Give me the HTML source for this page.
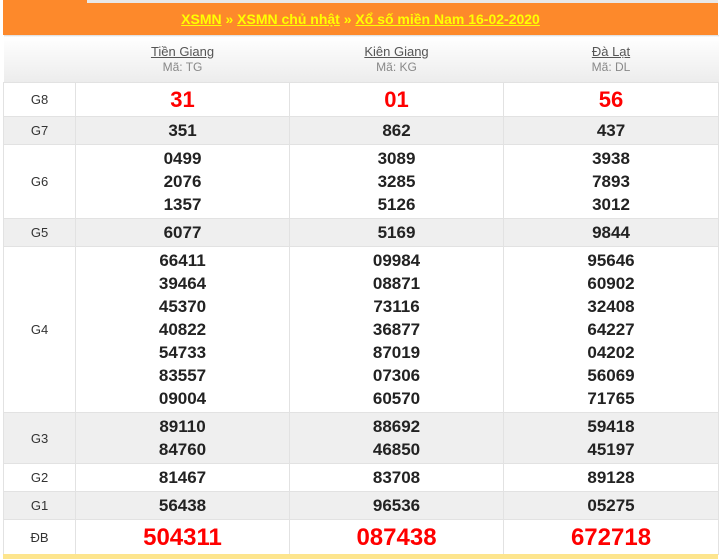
<!DOCTYPE html>
<html><head><meta charset="utf-8"><style>
*{margin:0;padding:0;box-sizing:border-box}
body{width:721px;height:559px;background:#fff;font-family:"Liberation Sans",Arial,sans-serif;position:relative;overflow:hidden}
.hd{position:absolute;top:0;left:3px;width:715px;height:35px;background:#fd892b;text-align:center;font-weight:bold;font-size:14px;line-height:38px;color:#ffff00}
.hd .t{position:absolute;left:84px;top:0;width:631px;height:3px;background:#e8e8e8}
.hd a{color:#ffff00;text-decoration:underline}
table{position:absolute;top:35px;left:3px;width:715px;border-collapse:collapse;table-layout:fixed}
td{border:1px solid #e2e2e2;text-align:center;vertical-align:middle;padding:0}
td.l{font-size:13px;color:#333;width:72px}
td.n{font-weight:bold;font-size:17px;color:#222;line-height:23px}
tr.g td{background:#efefef}
tr.h td{background:linear-gradient(#fff,#ececec);height:47px;border-left:none;border-right:none}
.nm{font-size:13px;color:#555;text-decoration:underline;line-height:16px}
.ma{font-size:12px;color:#888;line-height:15px}
td.r{color:#f00;font-size:22px}
td.rb{color:#f00;font-size:24px}
.foot{position:absolute;top:554px;left:3px;width:715px;height:5px;background:#fde58e}
</style></head><body>
<div class="hd"><div class="t"></div><a>XSMN</a> » <a>XSMN chủ nhật</a> » <a>Xổ số miền Nam 16-02-2020</a></div>
<table>
<colgroup><col style="width:72px"><col style="width:214px"><col style="width:214px"><col style="width:215px"></colgroup>
<tr class="h"><td></td><td><div class="nm">Tiền Giang</div><div class="ma">Mã: TG</div></td><td><div class="nm">Kiên Giang</div><div class="ma">Mã: KG</div></td><td><div class="nm">Đà Lạt</div><div class="ma">Mã: DL</div></td></tr>
<tr style="height:34px"><td class="l">G8</td><td class="n r">31</td><td class="n r">01</td><td class="n r">56</td></tr>
<tr class="g" style="height:28px"><td class="l">G7</td><td class="n">351</td><td class="n">862</td><td class="n">437</td></tr>
<tr style="height:74px"><td class="l">G6</td><td class="n">0499<br>2076<br>1357</td><td class="n">3089<br>3285<br>5126</td><td class="n">3938<br>7893<br>3012</td></tr>
<tr class="g" style="height:28px"><td class="l">G5</td><td class="n">6077</td><td class="n">5169</td><td class="n">9844</td></tr>
<tr style="height:166px"><td class="l">G4</td><td class="n">66411<br>39464<br>45370<br>40822<br>54733<br>83557<br>09004</td><td class="n">09984<br>08871<br>73116<br>36877<br>87019<br>07306<br>60570</td><td class="n">95646<br>60902<br>32408<br>64227<br>04202<br>56069<br>71765</td></tr>
<tr class="g" style="height:51px"><td class="l">G3</td><td class="n">89110<br>84760</td><td class="n">88692<br>46850</td><td class="n">59418<br>45197</td></tr>
<tr style="height:28px"><td class="l">G2</td><td class="n">81467</td><td class="n">83708</td><td class="n">89128</td></tr>
<tr class="g" style="height:28px"><td class="l">G1</td><td class="n">56438</td><td class="n">96536</td><td class="n">05275</td></tr>
<tr style="height:35px"><td class="l">ĐB</td><td class="n rb">504311</td><td class="n rb">087438</td><td class="n rb">672718</td></tr>
</table>
<div class="foot"></div>
</body></html>
